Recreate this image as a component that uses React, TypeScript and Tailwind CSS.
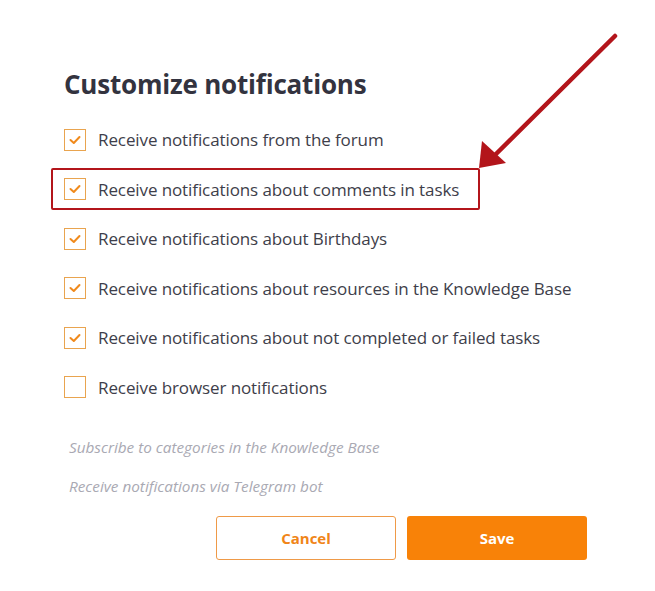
import React from "react";

const items: { label: string; checked: boolean; highlight?: boolean }[] = [
  { label: "Receive notifications from the forum", checked: true },
  { label: "Receive notifications about comments in tasks", checked: true, highlight: true },
  { label: "Receive notifications about Birthdays", checked: true },
  { label: "Receive notifications about resources in the Knowledge Base", checked: true },
  { label: "Receive notifications about not completed or failed tasks", checked: true },
  { label: "Receive browser notifications", checked: false },
];

function Box({ checked }: { checked: boolean }) {
  return (
    <div className="w-[22px] h-[22px] border border-[#e9a44f] flex items-center justify-center shrink-0 bg-white">
      {checked && (
        <svg width="12" height="10" viewBox="0 0 12 10" fill="none">
          <path d="M1.5 5 L4.8 8 L10.5 2" stroke="#f08a1c" strokeWidth="2" strokeLinecap="round" strokeLinejoin="round" />
        </svg>
      )}
    </div>
  );
}

export default function App() {
  return (
    <div className="relative w-[655px] h-[591px] bg-white overflow-hidden" style={{ fontFamily: '"Open Sans", "Noto Sans", sans-serif' }}>
      <div className="pl-[64px] pt-[66px]">
        <h1 className="text-[26px] font-bold text-[#33333f] leading-[36px] tracking-[-0.2px]">Customize notifications</h1>
        <div className="mt-[13px] flex flex-col">
          {items.map((it) => (
            <div key={it.label} className="relative h-[49.5px] flex items-center gap-[12px]">
              {it.highlight && (
                <div className="absolute left-[-13px] top-[3px] w-[429px] h-[42px] border-[2.5px] border-[#b3151b] rounded-[2px]" />
              )}
              <Box checked={it.checked} />
              <span className="text-[17px] text-[#3e3e4a] tracking-[-0.1px]">{it.label}</span>
            </div>
          ))}
        </div>
        <div className="mt-[24px] ml-[5px] flex flex-col gap-[17px] text-[15.3px] italic text-[#a9a9b3]">
          <span className="leading-[22px]">Subscribe to categories in the Knowledge Base</span>
          <span className="leading-[22px]">Receive notifications via Telegram bot</span>
        </div>
        <div className="mt-[19px] ml-[152px] flex gap-[11px]">
          <button className="w-[180px] h-[44px] border border-[#ef9a48] rounded-[3px] text-[#f08518] font-bold text-[15px] bg-white">Cancel</button>
          <button className="w-[180px] h-[44px] rounded-[3px] bg-[#f88208] text-white font-bold text-[15px]">Save</button>
        </div>
      </div>
      <svg className="absolute left-0 top-0 pointer-events-none" width="655" height="591">
        <line x1="615" y1="36" x2="494" y2="156" stroke="#b3151b" strokeWidth="4.5" strokeLinecap="round" />
        <polygon points="479,168 482,141 506,163" fill="#b3151b" />
      </svg>
    </div>
  );
}
